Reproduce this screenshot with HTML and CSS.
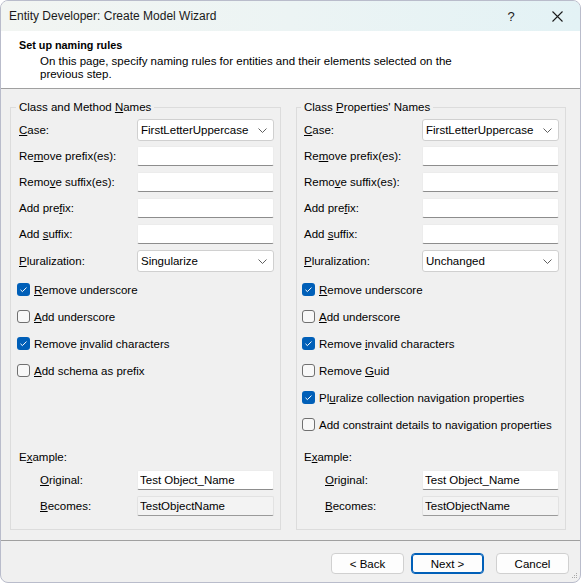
FILE: index.html
```html
<!DOCTYPE html>
<html lang="en">
<head>
<meta charset="utf-8">
<title>Entity Developer: Create Model Wizard</title>
<link rel="stylesheet" href="styles.css">
</head>
<body>
<div class="window">
  <div class="titlebar">
    <span class="title">Entity Developer: Create Model Wizard</span>
    <span class="tb-btn help">?</span>
    <span class="tb-btn close"><svg width="11" height="11" viewBox="0 0 11 11"><path d="M0.5 0.5L10.5 10.5M10.5 0.5L0.5 10.5" stroke="#1b1b1b" stroke-width="1.1" fill="none"/></svg></span>
  </div>

  <div class="header">
    <div class="h-title">Set up naming rules</div>
    <div class="h-desc">On this page, specify naming rules for entities and their elements selected on the<br>previous step.</div>
  </div>

  <div class="content">
    <fieldset class="group">
      <legend>Class and Method <u>N</u>ames</legend>
      <div class="fields">
        <div class="row"><label><u>C</u>ase:</label><div class="combo"><span>FirstLetterUppercase</span><svg width="9" height="5" viewBox="0 0 9 5"><path d="M0.5 0.5L4.5 4.5L8.5 0.5" stroke="#5f5f5f" fill="none"/></svg></div></div>
        <div class="row"><label>Re<u>m</u>ove prefix(es):</label><input class="edit" type="text" value=""></div>
        <div class="row"><label>Remo<u>v</u>e suffix(es):</label><input class="edit" type="text" value=""></div>
        <div class="row"><label>Add pre<u>f</u>ix:</label><input class="edit" type="text" value=""></div>
        <div class="row"><label>Add <u>s</u>uffix:</label><input class="edit" type="text" value=""></div>
        <div class="row tall"><label><u>P</u>luralization:</label><div class="combo"><span>Singularize</span><svg width="9" height="5" viewBox="0 0 9 5"><path d="M0.5 0.5L4.5 4.5L8.5 0.5" stroke="#5f5f5f" fill="none"/></svg></div></div>
      </div>
      <div class="checks">
        <div class="check"><span class="box on"><svg width="13" height="13" viewBox="0 0 13 13"><path d="M3.5 6.8L5.4 8.6L9.5 4.6" stroke="#fff" stroke-width="1" fill="none"/></svg></span><span><u>R</u>emove underscore</span></div>
        <div class="check"><span class="box"></span><span><u>A</u>dd underscore</span></div>
        <div class="check"><span class="box on"><svg width="13" height="13" viewBox="0 0 13 13"><path d="M3.5 6.8L5.4 8.6L9.5 4.6" stroke="#fff" stroke-width="1" fill="none"/></svg></span><span>Remove <u>i</u>nvalid characters</span></div>
        <div class="check"><span class="box"></span><span><u>A</u>dd schema as prefix</span></div>
      </div>
      <div class="example">
        <div class="ex-title">E<u>x</u>ample:</div>
        <div class="row"><label class="indent"><u>O</u>riginal:</label><input class="edit" type="text" value="Test Object_Name"></div>
        <div class="row"><label class="indent"><u>B</u>ecomes:</label><input class="edit readonly" type="text" value="TestObjectName" readonly></div>
      </div>
    </fieldset>

    <fieldset class="group right">
      <legend>Class <u>P</u>roperties' Names</legend>
      <div class="fields">
        <div class="row"><label><u>C</u>ase:</label><div class="combo"><span>FirstLetterUppercase</span><svg width="9" height="5" viewBox="0 0 9 5"><path d="M0.5 0.5L4.5 4.5L8.5 0.5" stroke="#5f5f5f" fill="none"/></svg></div></div>
        <div class="row"><label>Re<u>m</u>ove prefix(es):</label><input class="edit" type="text" value=""></div>
        <div class="row"><label>Remo<u>v</u>e suffix(es):</label><input class="edit" type="text" value=""></div>
        <div class="row"><label>Add pre<u>f</u>ix:</label><input class="edit" type="text" value=""></div>
        <div class="row"><label>Add <u>s</u>uffix:</label><input class="edit" type="text" value=""></div>
        <div class="row tall"><label><u>P</u>luralization:</label><div class="combo"><span>Unchanged</span><svg width="9" height="5" viewBox="0 0 9 5"><path d="M0.5 0.5L4.5 4.5L8.5 0.5" stroke="#5f5f5f" fill="none"/></svg></div></div>
      </div>
      <div class="checks">
        <div class="check"><span class="box on"><svg width="13" height="13" viewBox="0 0 13 13"><path d="M3.5 6.8L5.4 8.6L9.5 4.6" stroke="#fff" stroke-width="1" fill="none"/></svg></span><span><u>R</u>emove underscore</span></div>
        <div class="check"><span class="box"></span><span><u>A</u>dd underscore</span></div>
        <div class="check"><span class="box on"><svg width="13" height="13" viewBox="0 0 13 13"><path d="M3.5 6.8L5.4 8.6L9.5 4.6" stroke="#fff" stroke-width="1" fill="none"/></svg></span><span>Remove <u>i</u>nvalid characters</span></div>
        <div class="check"><span class="box"></span><span>Remove <u>G</u>uid</span></div>
        <div class="check"><span class="box on"><svg width="13" height="13" viewBox="0 0 13 13"><path d="M3.5 6.8L5.4 8.6L9.5 4.6" stroke="#fff" stroke-width="1" fill="none"/></svg></span><span>Pl<u>u</u>ralize collection navigation properties</span></div>
        <div class="check"><span class="box"></span><span>Add constraint details to navigation properties</span></div>
      </div>
      <div class="example">
        <div class="ex-title">E<u>x</u>ample:</div>
        <div class="row"><label class="indent"><u>O</u>riginal:</label><input class="edit" type="text" value="Test Object_Name"></div>
        <div class="row"><label class="indent"><u>B</u>ecomes:</label><input class="edit readonly" type="text" value="TestObjectName" readonly></div>
      </div>
    </fieldset>
  </div>

  <div class="footer">
    <button class="btn">&lt; Back</button>
    <button class="btn default">Next &gt;</button>
    <button class="btn cancel">Cancel</button>
    <svg class="grip" width="7" height="7" viewBox="0 0 7 7"><g fill="#a8a8a8"><rect x="5" y="0" width="1" height="1"/><rect x="3" y="2" width="1" height="1"/><rect x="5" y="2" width="1" height="1"/><rect x="1" y="4" width="1" height="1"/><rect x="3" y="4" width="1" height="1"/><rect x="5" y="4" width="1" height="1"/></g></svg>
  </div>
</div>
</body>
</html>
```

FILE: styles.css
```css
* { box-sizing: border-box; }

html, body {
  margin: 0;
  padding: 0;
  background: #ffffff;
}

body {
  font-family: "Liberation Sans", Arial, sans-serif;
  font-size: 11.5px;
  color: #000;
}

.window {
  position: relative;
  width: 581px;
  height: 583px;
  border: 1px solid #b9bccb;
  border-radius: 8px;
  overflow: hidden;
  background: #f0f0f0;
  display: flex;
  flex-direction: column;
}

/* Title bar */
.titlebar {
  height: 30px;
  flex: 0 0 30px;
  display: flex;
  align-items: center;
  background: linear-gradient(90deg, #f2f5f2 0%, #ecf4f4 50%, #e3f2f5 100%);
}

.title {
  flex: 1;
  padding-left: 8px;
  font-size: 12px;
  color: #1a1a1a;
}

.tb-btn {
  width: 46px;
  height: 30px;
  display: flex;
  align-items: center;
  justify-content: center;
  color: #1b1b1b;
}

.help {
  font-size: 13px;
}

/* Header */
.header {
  flex: 0 0 58px;
  background: #ffffff;
  border-bottom: 1px solid #a0a0a0;
  padding: 7px 0 0 18px;
}

.h-title {
  font-weight: bold;
  font-size: 10.8px;
  line-height: 15px;
}

.h-desc {
  margin-top: 2px;
  padding-left: 21px;
  line-height: 13px;
}

/* Content */
.content {
  flex: 1;
  display: flex;
  gap: 15px;
  padding: 11px 14px 10px 9px;
}

.group {
  flex: 1;
  min-width: 0;
  margin: 0;
  border: 1px solid #dcdcdc;
  padding: 0 6px 10px 8px;
  display: flex;
  flex-direction: column;
}

.group.right {
  padding-left: 7px;
}

.group legend {
  padding: 0 3px;
  margin-left: -3px;
  line-height: 15px;
}

.fields {
  margin-top: 2px;
}

.row {
  height: 26px;
  display: grid;
  grid-template-columns: 118px 137px;
  align-items: center;
}

.row.tall {
  height: 28px;
}

label.indent {
  padding-left: 21px;
}

.combo {
  height: 22px;
  background: #ffffff;
  border: 1px solid #d0d0d0;
  border-radius: 3px;
  display: flex;
  align-items: center;
  justify-content: space-between;
  padding: 0 6px 0 3px;
}

.edit {
  height: 20px;
  width: 137px;
  margin: 0;
  font: inherit;
  color: #000;
  background: #ffffff;
  border: 1px solid #ececec;
  border-bottom: 1px solid #8d8d8d;
  border-radius: 2px;
  padding: 0 2px;
  outline: none;
}

.edit.readonly {
  background: #f3f3f3;
  border-color: #e2e2e2;
  border-bottom-color: #9a9a9a;
}

/* Checkboxes */
.checks {
  margin-top: 1px;
}

.check {
  height: 27px;
  display: flex;
  align-items: center;
  gap: 4px;
  margin-left: -2px;
}

.box {
  width: 13px;
  height: 13px;
  flex: 0 0 13px;
  border: 1px solid #707070;
  border-radius: 3px;
  background: #f8f8f8;
  display: flex;
}

.box.on {
  border: none;
  background: #005fb8;
}

/* Example */
.example {
  margin-top: auto;
}

.ex-title {
  height: 20px;
  display: flex;
  align-items: center;
}

/* Footer */
.footer {
  position: relative;
  flex: 0 0 42px;
  border-top: 1px solid #a0a0a0;
  display: flex;
  justify-content: flex-end;
  align-items: flex-start;
  padding: 12px 11px 0 0;
}

.btn {
  width: 73px;
  height: 21px;
  margin: 0;
  padding: 0;
  font: inherit;
  font-size: 11.5px;
  color: #000;
  background: #fdfdfd;
  border: 1px solid #d0d0d0;
  border-radius: 4px;
}

.btn.default {
  margin-left: 7px;
  border: 1px solid #005fb8;
  box-shadow: inset 0 0 0 1px #005fb8;
}

.btn.cancel {
  margin-left: 12px;
}

.grip {
  position: absolute;
  right: 2px;
  bottom: 2px;
}
```
